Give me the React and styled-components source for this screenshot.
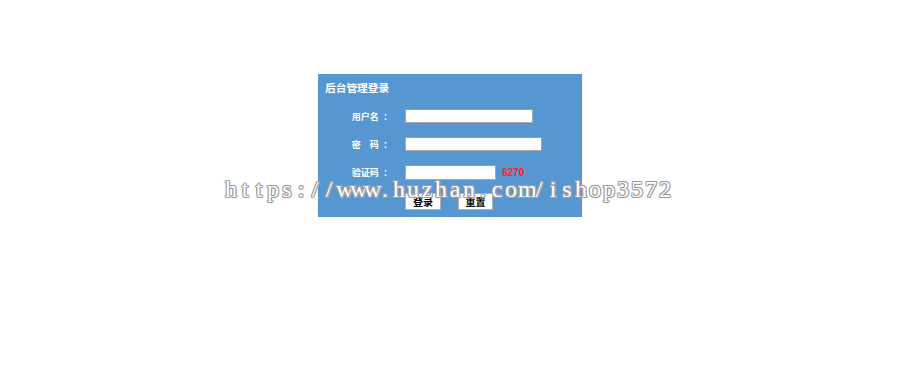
import React from 'react';
import styled, { createGlobalStyle } from 'styled-components';

const GlobalStyle = createGlobalStyle`
  html, body {
    margin: 0;
    padding: 0;
    background: #fff;
  }
  body {
    font-family: "Noto Sans CJK SC", "Liberation Sans", sans-serif;
  }
`;

const watermark = 'https://www.huzhan.com/ishop3572';

export default function App() {
  return (
    <SPage>
      <GlobalStyle />
      <SPanel>
        <STitle>后台管理登录</STitle>
        <SForm>
          <SLabel>用户名<SColon>:</SColon></SLabel>
          <SCell>
            <SInput type="text" $w={128} />
          </SCell>

          <SLabel>密　码<SColon>:</SColon></SLabel>
          <SCell>
            <SInput type="password" $w={137} />
          </SCell>

          <SLabel>验证码<SColon>:</SColon></SLabel>
          <SCell>
            <SInput type="text" $w={91} $h={15} />
            <SCode>6270</SCode>
          </SCell>

          <span />
          <SButtons>
            <SButton type="button" $w={36}>登录</SButton>
            <SButton type="button" $w={35}>重置</SButton>
          </SButtons>
        </SForm>
      </SPanel>
      <SWatermark>
        {watermark.split('').map((c, i) => (
          <SChar key={i}>{c}</SChar>
        ))}
      </SWatermark>
    </SPage>
  );
}

const SPage = styled.div`
  position: relative;
  width: 900px;
  height: 375px;
  overflow: hidden;
  padding-top: 74px;
  box-sizing: border-box;
`;

const SPanel = styled.div`
  width: 264px;
  height: 143px;
  margin: 0 auto;
  background: #5797d1;
  color: #fff;
`;

const STitle = styled.div`
  height: 28px;
  line-height: 28px;
  padding-left: 7px;
  font-size: 10.7px;
  font-weight: bold;
`;

const SForm = styled.div`
  display: grid;
  grid-template-columns: 71px 1fr;
  grid-auto-rows: 28px;
  column-gap: 16px;
`;

const SLabel = styled.div`
  display: flex;
  align-items: center;
  justify-content: flex-end;
  font-size: 9px;
  font-weight: bold;
  white-space: nowrap;
`;

const SColon = styled.span`
  font-family: "Liberation Sans", Arial, sans-serif;
  font-size: 10px;
  margin-left: 5px;
  margin-right: 2px;
`;

const SCell = styled.div`
  display: flex;
  align-items: center;
  gap: 6px;
`;

const SInput = styled.input`
  box-sizing: border-box;
  width: ${p => p.$w}px;
  height: ${p => p.$h || 14}px;
  margin: 0;
  padding: 0 2px;
  border: 1px solid #a7a7a7;
  border-top-color: #9a9a9a;
  background: #fff;
  font-size: 10px;
  outline: none;
`;

const SCode = styled.span`
  font-family: "Liberation Sans", Arial, sans-serif;
  font-size: 10px;
  font-weight: bold;
  color: #ff2020;
`;

const SButtons = styled.div`
  display: flex;
  align-items: center;
  gap: 17px;
  height: 31px;
`;

const SButton = styled.button`
  box-sizing: border-box;
  width: ${p => p.$w}px;
  height: 17px;
  margin: 0;
  padding: 0;
  border: 1px solid #b0b0b0;
  background: #fff;
  color: #000;
  font-family: "Noto Sans CJK SC", sans-serif;
  font-size: 10px;
  font-weight: bold;
  line-height: 15px;
`;

const SWatermark = styled.div`
  position: absolute;
  left: 224px;
  top: 177px;
  display: flex;
  font-family: "Liberation Serif", "Times New Roman", serif;
  font-size: 24px;
  line-height: 24px;
  color: #fff;
  text-shadow:
    1px 0 0 #9a9a9a, -1px 0 0 #9a9a9a, 0 1px 0 #9a9a9a, 0 -1px 0 #9a9a9a,
    1px 1px 0 #b0b0b0, -1px -1px 0 #b0b0b0, 1px -1px 0 #b0b0b0, -1px 1px 0 #b0b0b0;
  pointer-events: none;
`;

const SChar = styled.span`
  display: inline-block;
  width: 14px;
  text-align: center;
`;
